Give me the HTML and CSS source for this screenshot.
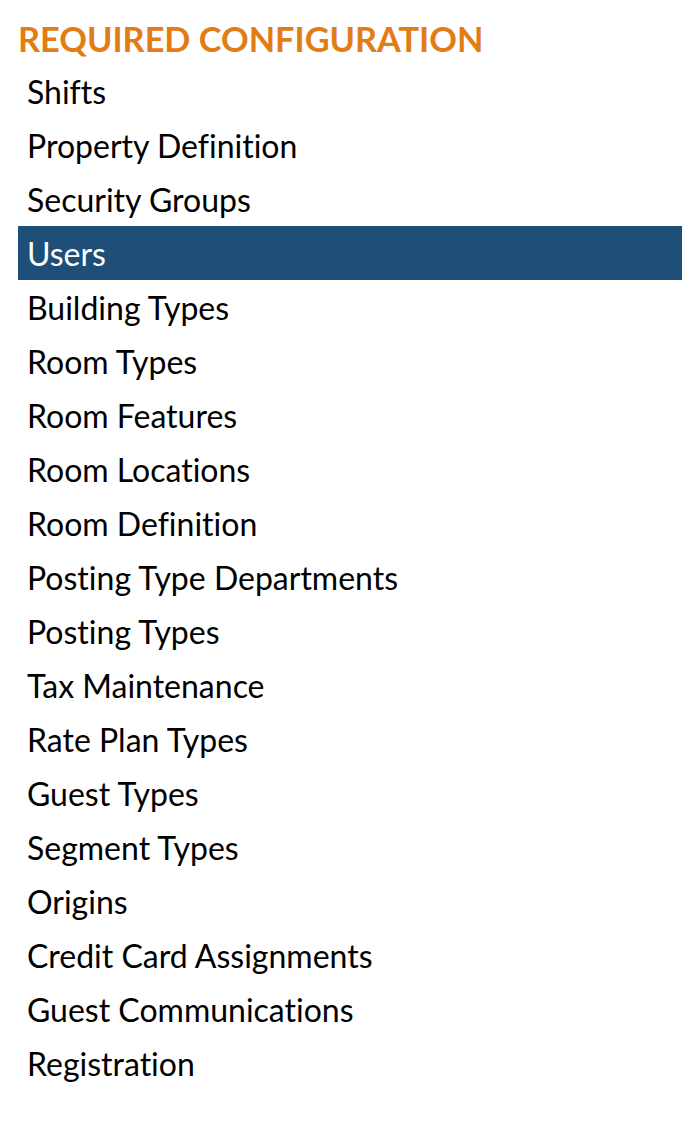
FILE: index.html
```html
<!DOCTYPE html>
<html lang="en">
<head>
    <meta charset="UTF-8">
    <title>Required Configuration</title>
    <link rel="stylesheet" href="styles.css">
</head>
<body>

    <div class="config">
        <h2>REQUIRED CONFIGURATION</h2>
        <ul class="config-list">
            <li>Shifts</li>
            <li>Property Definition</li>
            <li>Security Groups</li>
            <li class="active">Users</li>
            <li>Building Types</li>
            <li>Room Types</li>
            <li>Room Features</li>
            <li>Room Locations</li>
            <li>Room Definition</li>
            <li>Posting Type Departments</li>
            <li>Posting Types</li>
            <li>Tax Maintenance</li>
            <li>Rate Plan Types</li>
            <li>Guest Types</li>
            <li>Segment Types</li>
            <li>Origins</li>
            <li>Credit Card Assignments</li>
            <li>Guest Communications</li>
            <li>Registration</li>
        </ul>
    </div>

</body>
</html>
```

FILE: styles.css
```css
/* General Styling */
body {
    margin: 0;
    font-family: Lato, "Open Sans", sans-serif;
    font-variant-ligatures: no-common-ligatures;
    background-color: #ffffff;
    color: #000;
}

.config {
    width: 664px;
    margin-left: 18px;
}

h2 {
    margin: 14px 0 0 0;
    font-size: 34.3px;
    line-height: 50px;
    font-weight: bold;
    color: #e27d16;
}

.config-list {
    list-style-type: none;
    margin: 0;
    padding: 0;
}

.config-list li {
    height: 54px;
    line-height: 56px;
    padding-left: 9px;
    font-size: 32px;
    box-sizing: border-box;
    overflow: hidden;
}

.config-list li.active {
    background-color: #1d4f78;
    color: white;
}
```
